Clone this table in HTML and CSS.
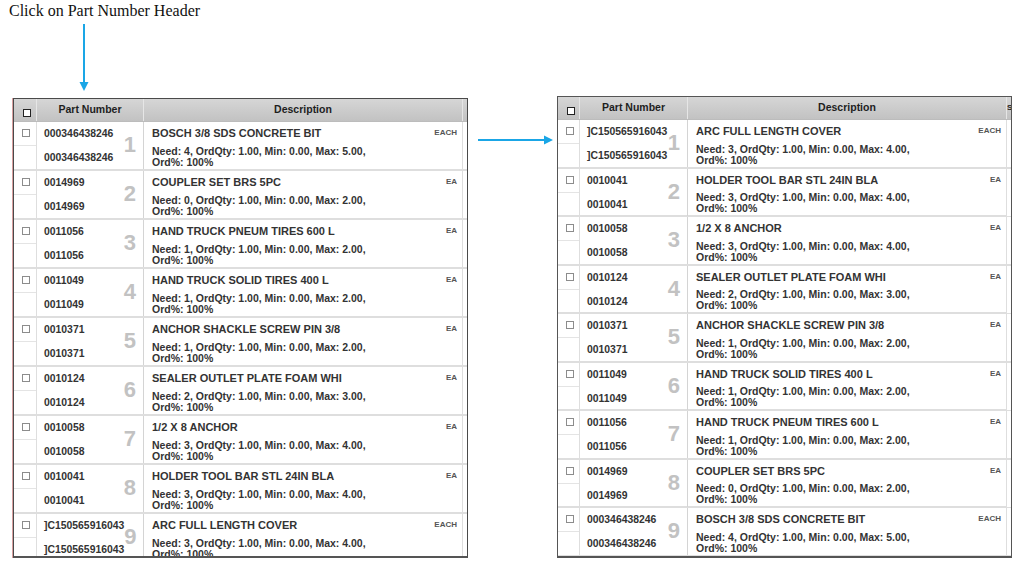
FILE: index.html
```html
<!DOCTYPE html>
<html>
<head>
<meta charset="utf-8">
<link rel="stylesheet" href="styles.css">
</head>
<body>
<div class="caption">Click on Part Number Header</div>
<div class="board">
  <div class="panel">
    <svg class="arrow-down" width="12" height="76" viewBox="0 0 12 76"><line x1="6" y1="2" x2="6" y2="62" stroke="#1aa6e6" stroke-width="2"/><polygon points="1.5,60 10.5,60 6,69" fill="#1aa6e6"/></svg>
    <div class="grid grid-left">
      <div class="head"><div class="hc hcb"><span class="box box-dark"></span></div><div class="hc">Part Number</div><div class="hc">Description</div><div class="hc hs"></div></div>
      <div class="row"><div class="cb"><div class="cbt"><span class="box"></span></div><div class="cbb"></div></div><div class="pn"><div class="nums"><div class="n1">000346438246</div><div class="n2">000346438246</div></div><div class="idx">1</div></div><div class="desc"><div class="txt"><div class="title">BOSCH 3/8 SDS CONCRETE BIT</div><div class="stats">Need: 4, OrdQty: 1.00, Min: 0.00, Max: 5.00, Ord%: 100%</div></div><div class="uom">EACH</div></div><div class="sl"></div></div>
      <div class="row"><div class="cb"><div class="cbt"><span class="box"></span></div><div class="cbb"></div></div><div class="pn"><div class="nums"><div class="n1">0014969</div><div class="n2">0014969</div></div><div class="idx">2</div></div><div class="desc"><div class="txt"><div class="title">COUPLER SET BRS 5PC</div><div class="stats">Need: 0, OrdQty: 1.00, Min: 0.00, Max: 2.00, Ord%: 100%</div></div><div class="uom">EA</div></div><div class="sl"></div></div>
      <div class="row"><div class="cb"><div class="cbt"><span class="box"></span></div><div class="cbb"></div></div><div class="pn"><div class="nums"><div class="n1">0011056</div><div class="n2">0011056</div></div><div class="idx">3</div></div><div class="desc"><div class="txt"><div class="title">HAND TRUCK PNEUM TIRES 600 L</div><div class="stats">Need: 1, OrdQty: 1.00, Min: 0.00, Max: 2.00, Ord%: 100%</div></div><div class="uom">EA</div></div><div class="sl"></div></div>
      <div class="row"><div class="cb"><div class="cbt"><span class="box"></span></div><div class="cbb"></div></div><div class="pn"><div class="nums"><div class="n1">0011049</div><div class="n2">0011049</div></div><div class="idx">4</div></div><div class="desc"><div class="txt"><div class="title">HAND TRUCK SOLID TIRES 400 L</div><div class="stats">Need: 1, OrdQty: 1.00, Min: 0.00, Max: 2.00, Ord%: 100%</div></div><div class="uom">EA</div></div><div class="sl"></div></div>
      <div class="row"><div class="cb"><div class="cbt"><span class="box"></span></div><div class="cbb"></div></div><div class="pn"><div class="nums"><div class="n1">0010371</div><div class="n2">0010371</div></div><div class="idx">5</div></div><div class="desc"><div class="txt"><div class="title">ANCHOR SHACKLE SCREW PIN 3/8</div><div class="stats">Need: 1, OrdQty: 1.00, Min: 0.00, Max: 2.00, Ord%: 100%</div></div><div class="uom">EA</div></div><div class="sl"></div></div>
      <div class="row"><div class="cb"><div class="cbt"><span class="box"></span></div><div class="cbb"></div></div><div class="pn"><div class="nums"><div class="n1">0010124</div><div class="n2">0010124</div></div><div class="idx">6</div></div><div class="desc"><div class="txt"><div class="title">SEALER OUTLET PLATE FOAM WHI</div><div class="stats">Need: 2, OrdQty: 1.00, Min: 0.00, Max: 3.00, Ord%: 100%</div></div><div class="uom">EA</div></div><div class="sl"></div></div>
      <div class="row"><div class="cb"><div class="cbt"><span class="box"></span></div><div class="cbb"></div></div><div class="pn"><div class="nums"><div class="n1">0010058</div><div class="n2">0010058</div></div><div class="idx">7</div></div><div class="desc"><div class="txt"><div class="title">1/2 X 8 ANCHOR</div><div class="stats">Need: 3, OrdQty: 1.00, Min: 0.00, Max: 4.00, Ord%: 100%</div></div><div class="uom">EA</div></div><div class="sl"></div></div>
      <div class="row"><div class="cb"><div class="cbt"><span class="box"></span></div><div class="cbb"></div></div><div class="pn"><div class="nums"><div class="n1">0010041</div><div class="n2">0010041</div></div><div class="idx">8</div></div><div class="desc"><div class="txt"><div class="title">HOLDER TOOL BAR STL 24IN BLA</div><div class="stats">Need: 3, OrdQty: 1.00, Min: 0.00, Max: 4.00, Ord%: 100%</div></div><div class="uom">EA</div></div><div class="sl"></div></div>
      <div class="row"><div class="cb"><div class="cbt"><span class="box"></span></div><div class="cbb"></div></div><div class="pn"><div class="nums"><div class="n1">]C150565916043</div><div class="n2">]C150565916043</div></div><div class="idx">9</div></div><div class="desc"><div class="txt"><div class="title">ARC FULL LENGTH COVER</div><div class="stats">Need: 3, OrdQty: 1.00, Min: 0.00, Max: 4.00, Ord%: 100%</div></div><div class="uom">EACH</div></div><div class="sl"></div></div>
    </div>
  </div>
  <svg class="arrow-right" width="76" height="10" viewBox="0 0 76 10"><line x1="1" y1="5" x2="68" y2="5" stroke="#1aa6e6" stroke-width="2"/><polygon points="67,0.5 67,9.5 76,5" fill="#1aa6e6"/></svg>
  <div class="panel panel-right">
    <div class="grid grid-right">
      <div class="head"><div class="hc hcb"><span class="box box-dark"></span></div><div class="hc">Part Number</div><div class="hc">Description</div><div class="hc hs">S</div></div>
      <div class="row"><div class="cb"><div class="cbt"><span class="box"></span></div><div class="cbb"></div></div><div class="pn"><div class="nums"><div class="n1">]C150565916043</div><div class="n2">]C150565916043</div></div><div class="idx">1</div></div><div class="desc"><div class="txt"><div class="title">ARC FULL LENGTH COVER</div><div class="stats">Need: 3, OrdQty: 1.00, Min: 0.00, Max: 4.00, Ord%: 100%</div></div><div class="uom">EACH</div></div><div class="sl"></div></div>
      <div class="row"><div class="cb"><div class="cbt"><span class="box"></span></div><div class="cbb"></div></div><div class="pn"><div class="nums"><div class="n1">0010041</div><div class="n2">0010041</div></div><div class="idx">2</div></div><div class="desc"><div class="txt"><div class="title">HOLDER TOOL BAR STL 24IN BLA</div><div class="stats">Need: 3, OrdQty: 1.00, Min: 0.00, Max: 4.00, Ord%: 100%</div></div><div class="uom">EA</div></div><div class="sl"></div></div>
      <div class="row"><div class="cb"><div class="cbt"><span class="box"></span></div><div class="cbb"></div></div><div class="pn"><div class="nums"><div class="n1">0010058</div><div class="n2">0010058</div></div><div class="idx">3</div></div><div class="desc"><div class="txt"><div class="title">1/2 X 8 ANCHOR</div><div class="stats">Need: 3, OrdQty: 1.00, Min: 0.00, Max: 4.00, Ord%: 100%</div></div><div class="uom">EA</div></div><div class="sl"></div></div>
      <div class="row"><div class="cb"><div class="cbt"><span class="box"></span></div><div class="cbb"></div></div><div class="pn"><div class="nums"><div class="n1">0010124</div><div class="n2">0010124</div></div><div class="idx">4</div></div><div class="desc"><div class="txt"><div class="title">SEALER OUTLET PLATE FOAM WHI</div><div class="stats">Need: 2, OrdQty: 1.00, Min: 0.00, Max: 3.00, Ord%: 100%</div></div><div class="uom">EA</div></div><div class="sl"></div></div>
      <div class="row"><div class="cb"><div class="cbt"><span class="box"></span></div><div class="cbb"></div></div><div class="pn"><div class="nums"><div class="n1">0010371</div><div class="n2">0010371</div></div><div class="idx">5</div></div><div class="desc"><div class="txt"><div class="title">ANCHOR SHACKLE SCREW PIN 3/8</div><div class="stats">Need: 1, OrdQty: 1.00, Min: 0.00, Max: 2.00, Ord%: 100%</div></div><div class="uom">EA</div></div><div class="sl"></div></div>
      <div class="row"><div class="cb"><div class="cbt"><span class="box"></span></div><div class="cbb"></div></div><div class="pn"><div class="nums"><div class="n1">0011049</div><div class="n2">0011049</div></div><div class="idx">6</div></div><div class="desc"><div class="txt"><div class="title">HAND TRUCK SOLID TIRES 400 L</div><div class="stats">Need: 1, OrdQty: 1.00, Min: 0.00, Max: 2.00, Ord%: 100%</div></div><div class="uom">EA</div></div><div class="sl"></div></div>
      <div class="row"><div class="cb"><div class="cbt"><span class="box"></span></div><div class="cbb"></div></div><div class="pn"><div class="nums"><div class="n1">0011056</div><div class="n2">0011056</div></div><div class="idx">7</div></div><div class="desc"><div class="txt"><div class="title">HAND TRUCK PNEUM TIRES 600 L</div><div class="stats">Need: 1, OrdQty: 1.00, Min: 0.00, Max: 2.00, Ord%: 100%</div></div><div class="uom">EA</div></div><div class="sl"></div></div>
      <div class="row"><div class="cb"><div class="cbt"><span class="box"></span></div><div class="cbb"></div></div><div class="pn"><div class="nums"><div class="n1">0014969</div><div class="n2">0014969</div></div><div class="idx">8</div></div><div class="desc"><div class="txt"><div class="title">COUPLER SET BRS 5PC</div><div class="stats">Need: 0, OrdQty: 1.00, Min: 0.00, Max: 2.00, Ord%: 100%</div></div><div class="uom">EA</div></div><div class="sl"></div></div>
      <div class="row"><div class="cb"><div class="cbt"><span class="box"></span></div><div class="cbb"></div></div><div class="pn"><div class="nums"><div class="n1">000346438246</div><div class="n2">000346438246</div></div><div class="idx">9</div></div><div class="desc"><div class="txt"><div class="title">BOSCH 3/8 SDS CONCRETE BIT</div><div class="stats">Need: 4, OrdQty: 1.00, Min: 0.00, Max: 5.00, Ord%: 100%</div></div><div class="uom">EACH</div></div><div class="sl"></div></div>
    </div>
  </div>
</div>
</body>
</html>
```

FILE: styles.css
```css
html, body {
  margin: 0;
  padding: 0;
  background: #fff;
}
body {
  width: 1024px;
  height: 572px;
  overflow: hidden;
  font-family: "Liberation Sans", Arial, sans-serif;
}
.caption {
  font-family: "Liberation Serif", "Times New Roman", serif;
  font-size: 16px;
  line-height: 22px;
  height: 22px;
  padding-left: 9px;
  color: #111;
}
.board {
  display: flex;
  align-items: flex-start;
}
.panel {
  display: flex;
  flex-direction: column;
  margin-left: 13px;
}
.arrow-down {
  display: block;
  margin-left: 65px;
}
.arrow-right {
  display: block;
  margin-top: 113px;
  margin-left: 9px;
}
.panel-right {
  margin-left: 4px;
  margin-top: 74px;
}
.grid {
  box-sizing: border-box;
  width: 455px;
  border: 1px solid #4a4a4a;
  border-bottom: 2px solid #555;
  overflow: hidden;
  background: #fff;
  color: #333;
}
.grid-left {
  height: 460px;
  --cb: 23px;
  --pn: 107px;
  --desc: 319px;
  --rh: 49px;
  box-shadow: -1px 0 0 #d9a0a0;
}
.grid-right {
  height: 462px;
  --cb: 22px;
  --pn: 108px;
  --desc: 319px;
  --rh: 48.5px;
  border-color: #555;
}
.head, .row {
  display: grid;
  grid-template-columns: var(--cb) var(--pn) var(--desc) 1fr;
}
.head {
  height: 23px;
  background: linear-gradient(#d6d6d6, #c2c2c2);
  border-bottom: 1px solid #bcbcbc;
  box-sizing: border-box;
}
.hc {
  font-weight: bold;
  font-size: 10.5px;
  color: #1e1e1e;
  text-align: center;
  line-height: 21px;
  border-right: 1px solid #e6e6e6;
  overflow: hidden;
  white-space: nowrap;
}
.hcb {
  display: flex;
  align-items: flex-end;
  padding: 0 0 4px 9px;
  box-sizing: border-box;
}
.hs {
  border-right: none;
  text-align: left;
  padding-left: 0;
  font-size: 8px;
}
.box {
  display: block;
  box-sizing: border-box;
  width: 8px;
  height: 8px;
  border: 1px solid #8c8c8c;
  background: #fff;
}
.box-dark {
  border: 1.5px solid #222;
}
.row {
  height: var(--rh);
  box-sizing: border-box;
  border-bottom: 2px solid #dedede;
}
.cb {
  display: flex;
  flex-direction: column;
  border-right: 1px solid #dedede;
}
.cbt {
  height: 24px;
  box-sizing: border-box;
  border-bottom: 1px solid #e4e4e4;
  padding: 7px 0 0 8px;
}
.cbb {
  flex: 1;
}
.pn {
  display: grid;
  grid-template-columns: 1fr auto;
  border-right: 1px solid #d4d4d4;
  padding-left: 7px;
}
.nums {
  font-weight: bold;
  font-size: 10.4px;
  color: #333;
  white-space: nowrap;
}
.n1 {
  height: 24px;
  line-height: 24px;
}
.n2 {
  height: 23px;
  line-height: 23px;
}
.idx {
  align-self: center;
  font-size: 22px;
  font-weight: bold;
  color: #c2c2c2;
  padding-right: 7px;
  line-height: 22px;
  margin-top: -1px;
}
.desc {
  display: flex;
  justify-content: space-between;
  align-items: flex-start;
  padding: 5px 5px 0 8px;
  border-right: 1px solid #dedede;
  overflow: hidden;
}
.title {
  font-weight: bold;
  font-size: 11px;
  line-height: 12px;
  color: #333;
  white-space: nowrap;
}
.stats {
  font-weight: bold;
  font-size: 10.5px;
  line-height: 11px;
  margin-top: 6.5px;
  max-width: 240px;
  color: #333;
}
.uom {
  font-weight: bold;
  font-size: 8px;
  line-height: 12px;
  color: #555;
}
.sl {
  background: #fff;
}
```
